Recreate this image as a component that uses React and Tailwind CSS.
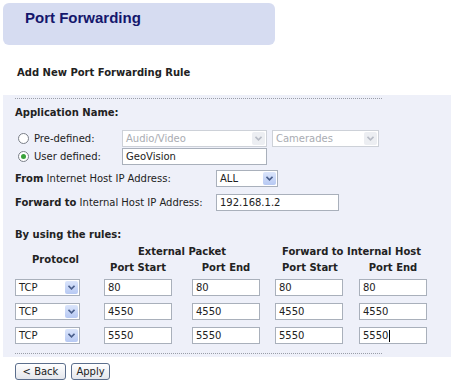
import React from "react";

const Chevron = ({ disabled }) => (
  <svg width="7" height="5" viewBox="0 0 7 5">
    <path d="M0.5 0.8 L3.5 3.8 L6.5 0.8" fill="none" stroke={disabled ? "#b8bcc6" : "#4a5f8c"} strokeWidth="1.6" />
  </svg>
);

const Select = ({ value, width, disabled }) => (
  <div
    className={`flex h-[17px] items-center justify-between border bg-white pl-[3px] pr-[1px] ${
      disabled ? "border-[#cdd1d8] text-[#a9acb2]" : "border-[#a9b0bb] text-[#222]"
    }`}
    style={{ width }}
  >
    <span className="leading-none">{value}</span>
    <div
      className={`flex h-[13px] w-[13px] items-center justify-center rounded-[2px] ${
        disabled ? "bg-[#eceef2]" : "bg-gradient-to-b from-[#dbe5fb] to-[#b7c9f3]"
      }`}
    >
      <Chevron disabled={disabled} />
    </div>
  </div>
);

const Input = ({ value, width, caret }) => (
  <div
    className="flex h-[17px] items-center border border-[#a9b0bb] bg-white pl-[3px] text-[#222]"
    style={{ width }}
  >
    <span className="leading-none">{value}</span>
    {caret && <span className="ml-[1px] h-[12px] w-px bg-black" />}
  </div>
);

const Radio = ({ checked }) => (
  <div className="flex h-[11px] w-[11px] items-center justify-center rounded-full border border-[#7a7f88] bg-white">
    {checked && <div className="h-[5px] w-[5px] rounded-full bg-[#3aa23a]" />}
  </div>
);

const Button = ({ children, width }) => (
  <div
    className="flex h-[17px] items-center justify-center rounded-[3px] border border-[#5b6e8c] bg-gradient-to-b from-white to-[#e4e6ec] text-[#222]"
    style={{ width }}
  >
    {children}
  </div>
);

const rows = [
  ["80", "80", "80", "80"],
  ["4550", "4550", "4550", "4550"],
  ["5550", "5550", "5550", "5550"],
];

export default function App() {
  return (
    <div
      className="h-[382px] w-[460px] whitespace-nowrap bg-white px-[3px] pt-[3px] text-[10px] text-[#222]"
      style={{ fontFamily: "'DejaVu Sans', Verdana, sans-serif" }}
    >
      {/* Title bar */}
      <div className="flex h-[42px] w-[272px] items-start rounded-[6px] bg-[#d6dcf1] pl-[22px] pt-[4px]">
        <h1
          className="text-[15px] font-bold text-[#14166c]"
          style={{ fontFamily: "'Liberation Sans', Arial, sans-serif" }}
        >
          Port Forwarding
        </h1>
      </div>

      <p className="mt-[21px] pl-[14px] font-bold leading-[14px]">Add New Port Forwarding Rule</p>

      {/* Form panel */}
      <div className="mt-[15px] w-[448px] bg-[#eef0f9] pb-[3px] pl-[12px] pt-[3px]">
        <div className="w-[367px] border-t border-dotted border-[#9a9ea8]" />

        <p className="mt-[7px] font-bold leading-[14px]">Application Name:</p>

        <div className="mt-[10px] flex h-[17px] items-center">
          <div className="ml-[3px] w-[16px]">
            <Radio />
          </div>
          <span className="w-[88px]">Pre-defined:</span>
          <Select value="Audio/Video" width={145} disabled />
          <div className="w-[5px]" />
          <Select value="Camerades" width={107} disabled />
        </div>

        <div className="mt-px flex h-[17px] items-center">
          <div className="ml-[3px] w-[16px]">
            <Radio checked />
          </div>
          <span className="w-[88px]">User defined:</span>
          <Input value="GeoVision" width={145} />
        </div>

        <div className="mt-[5px] flex h-[17px] items-center">
          <span className="w-[201px]">
            <b>From</b> Internet Host IP Address:
          </span>
          <Select value="ALL" width={62} />
        </div>

        <div className="mt-[7px] flex h-[17px] items-center">
          <span className="w-[201px]">
            <b>Forward to</b> Internal Host IP Address:
          </span>
          <Input value="192.168.1.2" width={123} />
        </div>

        <p className="mt-[17px] font-bold leading-[14px]">By using the rules:</p>

        {/* Rules table header */}
        <div className="mt-px grid grid-cols-[89px_68px_20px_68px_15px_68px_16px_68px] grid-rows-[16px_16px] items-center font-bold">
          <div className="row-span-2 pl-[17px]">Protocol</div>
          <div className="col-span-3 col-start-2 text-center">External Packet</div>
          <div className="col-span-3 col-start-6 pl-[7px]">Forward to Internal Host</div>
          <div className="col-start-2 text-center">Port Start</div>
          <div className="col-start-4 text-center">Port End</div>
          <div className="col-start-6 pl-[7px]">Port Start</div>
          <div className="col-start-8 text-center">Port End</div>
        </div>

        <div className="mt-[4px] flex flex-col gap-[7px]">
          {rows.map((r, i) => (
            <div key={i} className="flex h-[17px] items-center">
              <Select value="TCP" width={65} />
              <div className="w-[24px]" />
              <Input value={r[0]} width={68} />
              <div className="w-[20px]" />
              <Input value={r[1]} width={68} />
              <div className="w-[15px]" />
              <Input value={r[2]} width={68} />
              <div className="w-[16px]" />
              <Input value={r[3]} width={68} caret={i === 2} />
            </div>
          ))}
        </div>

        <div className="mt-[9px] w-[367px] border-t border-dotted border-[#9a9ea8]" />
      </div>

      {/* Actions */}
      <div className="mt-[6px] flex gap-[5px] pl-[12px]">
        <Button width={51}>&lt; Back</Button>
        <Button width={39}>Apply</Button>
      </div>
    </div>
  );
}
